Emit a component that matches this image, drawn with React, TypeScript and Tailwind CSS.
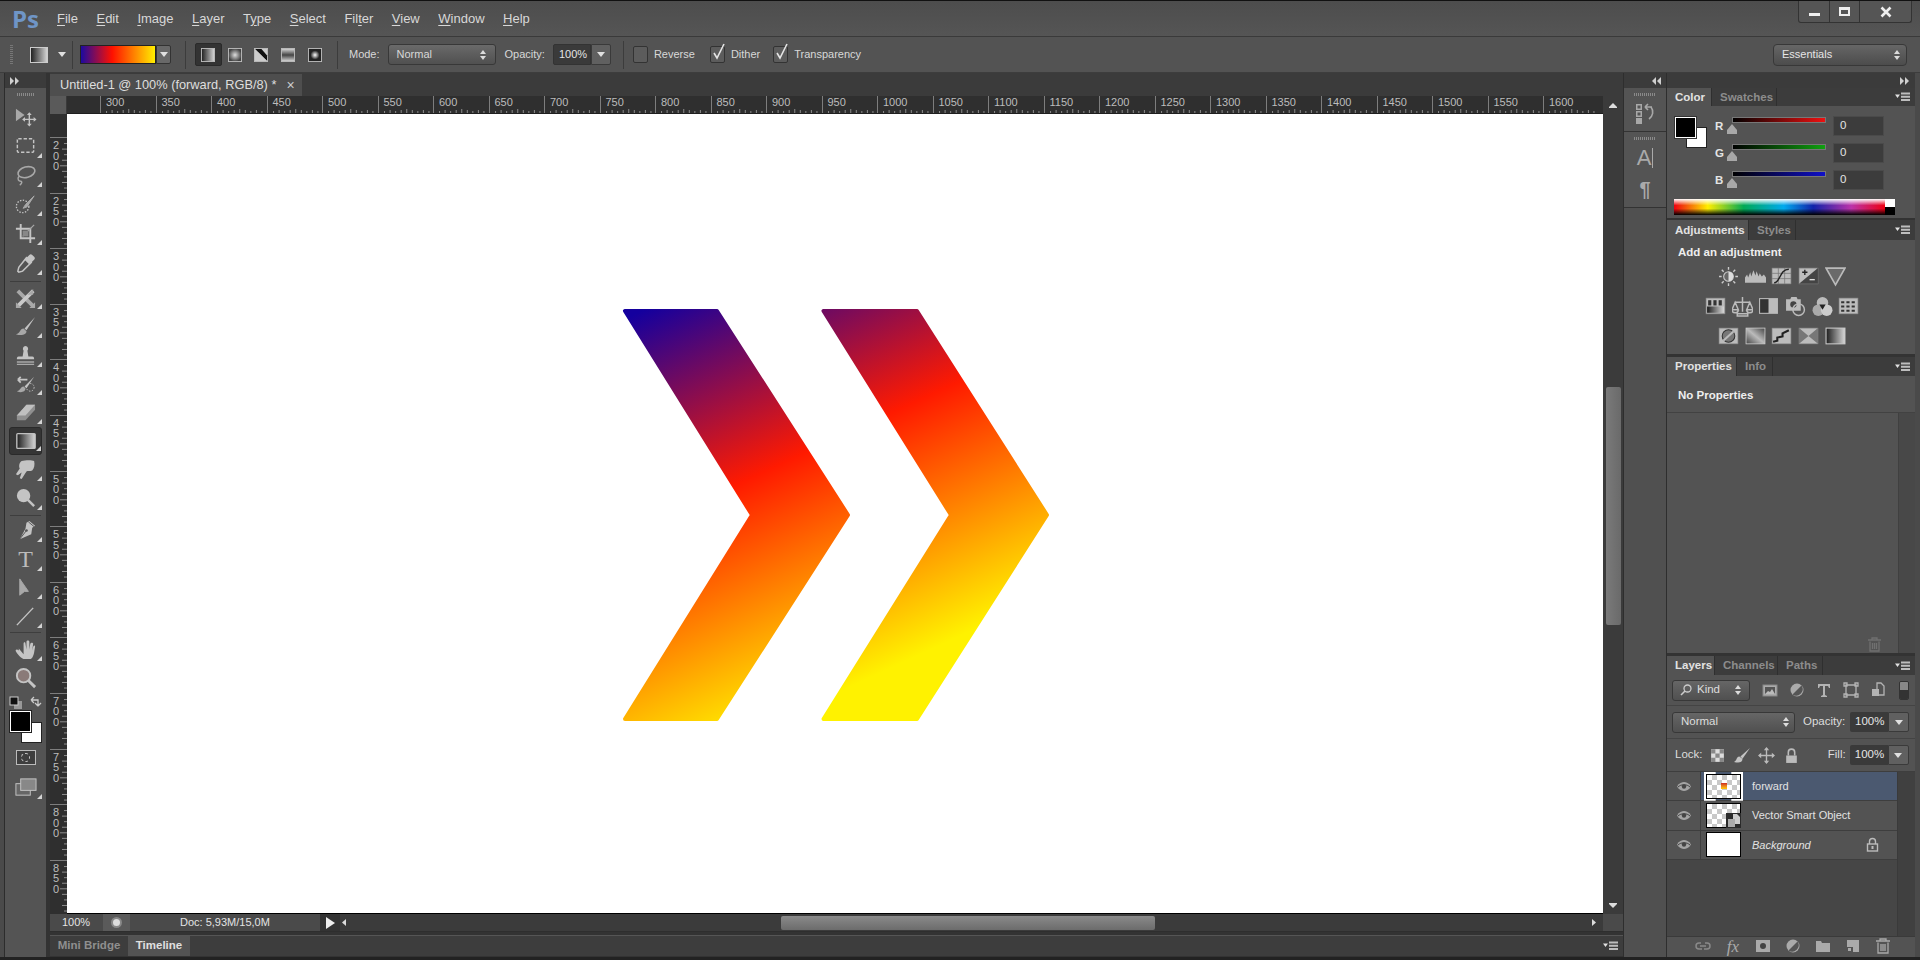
import React from "react";

const I = ({ s = 20, w, h, vb = "0 0 20 20", children }: { s?: number; w?: number; h?: number; vb?: string; children: React.ReactNode }) => (
  <svg width={w ?? s} height={h ?? s} viewBox={vb} className="shrink-0 block">{children}</svg>
);
const G = "#a8a8a8";
const L = "#c4c4c4";

const Updown = () => (
  <I w={8} h={12} vb="0 0 8 12"><path d="M4 1l3 4H1zM4 11L1 7h6z" fill="#dcdcdc" /></I>
);
const Caret = () => (
  <I w={8} h={5} vb="0 0 8 5"><path d="M0 0h8L4 5z" fill="#e0e0e0" /></I>
);
const PanelMenu = () => (
  <I w={15} h={10} vb="0 0 15 10"><path d="M0 2.5h5L2.5 6z" fill="#e0e0e0" /><path d="M6 .5h9v2H6zM6 3.7h9v2H6zM6 7h9v2H6z" fill="#bdbdbd" /></I>
);
const Gripper = ({ w = 22 }: { w?: number }) => (
  <div className="h-[3px] mx-auto bg-[repeating-linear-gradient(to_right,#8a8a8a_0,#8a8a8a_1px,transparent_1px,transparent_2px)]" style={{ width: w }} />
);
const DoubleArrow = ({ left = false }: { left?: boolean }) => (
  <I w={9} h={8} vb="0 0 9 8"><path d={left ? "M4 0v8L0 4zM9 0v8L5 4z" : "M0 0v8l4-4zM5 0v8l4-4z"} fill="#cfcfcf" /></I>
);

const Menu = () => {
  const items: [string, string, string][] = [
    ["", "F", "ile"], ["", "E", "dit"], ["", "I", "mage"], ["", "L", "ayer"], ["T", "y", "pe"],
    ["", "S", "elect"], ["Fil", "t", "er"], ["", "V", "iew"], ["", "W", "indow"], ["", "H", "elp"],
  ];
  return (
    <div className="h-[37px] shrink-0 border-t border-[#111] bg-linear-to-b from-[#4d4d4d] to-[#555] flex items-center relative border-b-[#3a3a3a] border-b">
      <div className="w-[57px] pl-[12px] text-[24px] leading-none font-bold text-[#6f95c6] font-['Open_Sans',sans-serif]">Ps</div>
      <div className="flex gap-[18.5px] text-[13px] text-[#d8d8d8]">
        {items.map(([a, u, b]) => (
          <span key={a + u + b}>{a}<span className="underline underline-offset-2">{u}</span>{b}</span>
        ))}
      </div>
      <div className="ml-auto mr-[8px] self-start flex h-[22px] w-[114px] border border-t-0 border-[#333] rounded-b-[3px] bg-[#555]">
        <div className="w-[31px] flex items-center justify-center border-r border-[#333] pt-[5px]"><div className="w-[11px] h-[3px] bg-[#eee]" /></div>
        <div className="w-[30px] flex items-center justify-center border-r border-[#333]"><div className="w-[11px] h-[9px] border-2 border-t-[3px] border-[#eee]" /></div>
        <div className="flex-1 flex items-center justify-center">
          <I s={12} vb="0 0 12 12"><path d="M1.5 1.5l9 9M10.5 1.5l-9 9" stroke="#eee" strokeWidth="2.6" /></I>
        </div>
      </div>
    </div>
  );
};

const VSep = ({ ml = 0, mr = 0 }: { ml?: number; mr?: number }) => (
  <div className="w-px h-[28px] bg-[#3c3c3c] shrink-0" style={{ marginLeft: ml, marginRight: mr }} />
);
const Check = ({ on }: { on?: boolean }) => (
  <div className="w-[15px] h-[17px] shrink-0 border border-[#333] rounded-[2px] bg-[#5c5c5c] relative">
    {on && (
      <div className="absolute left-0 -top-[4px]">
        <I w={15} h={18} vb="0 0 15 18"><path d="M3 10l3 5 7-14" fill="none" stroke="#e4e4e4" strokeWidth="1.6" /></I>
      </div>
    )}
  </div>
);

const ModeIcons = () => {
  const fills = ["url(#gl)", "url(#gr)", "", "url(#gf)", "url(#gd)"];
  return (
    <>
      {fills.map((f, i) => (
        <div key={i} className={"w-[26.6px] h-[23px] flex items-center justify-center rounded-[2px] " + (i === 0 ? "bg-[#333] border border-[#2a2a2a]" : "")}>
          <I s={14} vb="0 0 15 15">
            <rect x=".5" y=".5" width="14" height="14" fill={f || "#ccc"} stroke="#bbb" />
            {i === 2 && <path d="M1 1h7l6 7v6z" fill="#111" />}
            {i === 2 && <path d="M1 1l13 13H1z" fill="#ccc" />}
          </I>
        </div>
      ))}
    </>
  );
};

const Options = () => (
  <div className="h-[36px] shrink-0 bg-[#535353] border-b border-[#3d3d3d] flex items-center text-[11px] text-[#d8d8d8] pl-[10px]">
    <div className="w-[3px] h-[20px] bg-[repeating-linear-gradient(to_bottom,#777_0,#777_1px,transparent_1px,transparent_2px)] mr-[17px]" />
    <I w={18} h={16} vb="0 0 18 16"><rect x=".5" y=".5" width="17" height="15" fill="url(#gl)" stroke="#ccc" /></I>
    <div className="ml-[10px] mr-[6px]"><Caret /></div>
    <VSep ml={0} mr={7} />
    <div className="w-[76px] h-[19px] border border-[#222] bg-[linear-gradient(to_right,#1c0aa0,#ff1000_42%,#ffee00)]" />
    <div className="w-[15px] h-[19px] bg-[#686868] border border-[#333] rounded-r-[2px] flex items-center justify-center"><Caret /></div>
    <VSep ml={14} mr={9} />
    <ModeIcons />
    <VSep ml={9} mr={11} />
    <span>Mode:</span>
    <div className="ml-[8px] w-[108px] h-[21px] px-[8px] flex items-center justify-between rounded-[3px] border border-[#383838] bg-linear-to-b from-[#6a6a6a] to-[#505050]">
      <span>Normal</span><Updown />
    </div>
    <span className="ml-[9px] mr-[8px]">Opacity:</span>
    <div className="w-[38px] h-[21px] pl-[5px] flex items-center bg-[#3a3a3a] border border-[#333] rounded-l-[2px] text-[#e4e4e4]">100%</div>
    <div className="w-[20px] h-[21px] bg-[#606060] border border-[#3a3a3a] rounded-r-[2px] flex items-center justify-center"><Caret /></div>
    <VSep ml={12} mr={9} />
    <Check />
    <span className="ml-[6px] mr-[15px]">Reverse</span>
    <Check on />
    <span className="ml-[6px] mr-[13px]">Dither</span>
    <Check on />
    <span className="ml-[6px]">Transparency</span>
    <div className="ml-auto mr-[13px] w-[134px] h-[22px] pl-[8px] pr-[5px] flex items-center justify-between rounded-[4px] border border-[#383838] bg-linear-to-b from-[#666] to-[#4c4c4c] text-[#e6e6e6]">
      <span>Essentials</span><Updown />
    </div>
  </div>
);

const toolIcons: Record<string, React.ReactNode> = {
  move: <><path d="M2 4v13l9-6.5z" fill={G} /><path d="M16 9v12M10 15h12" stroke={L} strokeWidth="1.5" /><path d="M16 7.5l2.5 3h-5zM16 22.5l-2.5-3h5zM8.5 15l3-2.5v5zM23.5 15l-3 2.5v-5z" fill={L} /></>,
  marquee: <rect x="3.5" y="5" width="17" height="14" rx="1" fill="none" stroke={L} strokeWidth="1.5" strokeDasharray="3.5 2" />,
  lasso: <><ellipse cx="13" cy="8.5" rx="9" ry="5.5" transform="rotate(-15 13 8.5)" fill="none" stroke={G} strokeWidth="1.7" /><path d="M5 13c-2 3 0 5 2 5 2 0 1 3-1 4" fill="none" stroke={G} strokeWidth="1.5" /></>,
  quick: <><circle cx="9" cy="14" r="6.5" fill="none" stroke={L} strokeWidth="1.4" strokeDasharray="1.5 1.5" /><path d="M21 3l-9 9-2.5 4 4-1.5z" fill={G} stroke={G} /></>,
  crop: <><path d="M7 2v15h15M2 7h15v15" fill="none" stroke={L} strokeWidth="2" /><path d="M9 15l12-12" stroke={G} strokeWidth="1.2" /><rect x="9" y="9" width="6" height="6" fill="#888" /></>,
  dropper: <><path d="M13 6l5 5-9 9-4 1-1-1 1-4z" fill="none" stroke={L} strokeWidth="1.6" /><path d="M11 8l5-5c1-1 2-1 3 0l2 2c1 1 1 2 0 3l-5 5z" fill={L} /></>,
  heal: <><path d="M4 4l16 16" stroke={G} strokeWidth="4" /><path d="M20 4L4 20" stroke="#c8c8c8" strokeWidth="4" /><path d="M20 2v6h-6zM2 16l6 6H2zM22 16v6h-6z" fill={G} /></>,
  brush: <><path d="M22 2L11 14l2 2z" fill={L} /><path d="M10 14c-4 0-3 5-8 6 5 2 11 1 11-3z" fill={G} /></>,
  stamp: <><path d="M12 2a3 3 0 012 5l1 6h4c2 0 2 2 2 3H3c0-1 0-3 2-3h4l1-6a3 3 0 012-5z" fill={L} /><path d="M3 18h18v1.5H3zM3 20.5h18V22H3z" fill={G} /></>,
  hist: <><path d="M21 5L11 15l2 2z" fill={L} /><path d="M10 15c-3 0-3 4-7 5 4 2 9 1 9-3z" fill={G} /><path d="M4 8h10M4 8l3-3M4 8l3 3" stroke={L} strokeWidth="1.8" fill="none" /><circle cx="17" cy="16" r="4" fill="none" stroke={L} strokeDasharray="1.5 1.5" /></>,
  eraser: <><path d="M3 15L13 4h9v5L12 20H3z" fill="#8f8f8f" /><path d="M3 15L13 4h9l-10 11z" fill="#c0c0c0" /></>,
  gradient: <rect x="2" y="4" width="20" height="16" rx="1" fill="url(#gl)" stroke="#c0c0c0" strokeWidth="1.5" />,
  smudge: <path d="M8 3c4-1 11-1 13 0 1 4 0 8-2 10-2 1-5 0-6 1l-5 8-2-1 2-6-4 3-2-1 4-6c-1-2-1-6 2-8z" fill={L} />,
  dodge: <><circle cx="10" cy="9" r="7" fill={L} /><path d="M14 13l7 7" stroke={L} strokeWidth="2.6" /></>,
  pen: <><path d="M16 2l6 5-3 2-1 7-12 5 6-11 1-6z" fill={L} /><path d="M6 21l7-9" stroke="#555" strokeWidth="1" /><circle cx="13" cy="12" r="1.4" fill="#555" /><path d="M15 3l6 5" stroke="#555" /></>,
  path: <path d="M6 2v17l5-4 4 0z" fill={G} stroke={G} />,
  line: <path d="M3 21L20 3" stroke={L} strokeWidth="1.5" />,
  hand: <path d="M5 11l5 6V6c0-2 2-2 2 0l1 6V4c0-2 3-2 3 0v8l1-6c1-2 3-1 3 0l-1 7 1-4c1-2 2-1 2 0l-1 6c-1 5-3 7-4 7h-6c-3 0-7-5-9-8-1-2 1-3 3-1z" fill={L} />,
  zoom: <><circle cx="10" cy="9" r="7" fill="#8a7a78" stroke={L} strokeWidth="2" /><path d="M15 14l7 7" stroke={L} strokeWidth="3" /></>,
  screen: <><rect x="2" y="8" width="15" height="12" fill="#666" stroke={L} /><rect x="7" y="3" width="16" height="12" fill="#888" stroke={L} /></>,
};

const Tool = ({ n, flag = true, active = false, tight = false }: { n: string; flag?: boolean; active?: boolean; tight?: boolean }) => (
  <div className={"relative flex items-center justify-center rounded-[3px] mx-[4px] " + (tight ? "h-[28.6px] " : "h-[29.3px] ") + (active ? "bg-[#353535] border border-[#2a2a2a]" : "")}>
    {n === "type" ? (
      <span className="text-[24px] leading-none text-[#bbb] font-['Liberation_Serif',serif]">T</span>
    ) : (
      <I s={active ? 22 : 23} vb="0 0 24 24">{toolIcons[n]}</I>
    )}
    {flag && <div className="absolute right-[0px] bottom-[3px] w-0 h-0 border-l-[5px] border-l-transparent border-b-[5px] border-b-[#d4d4d4]" />}
  </div>
);
const ToolSep = () => <div className="h-px bg-[#3e3e3e] mx-[5px]" />;

const LeftDock = () => (
  <div className="w-[50px] shrink-0 flex bg-[#333]">
    <div className="w-[5px] bg-[#4a4a4a] border-r border-[#2c2c2c]" />
    <div className="w-[41px] flex flex-col">
      <div className="h-[15px] bg-[#3b3b3b] flex items-center pl-[5px]"><DoubleArrow /></div>
      <div className="flex-1 bg-[#545454]">
        <div className="pt-[5px] h-[14px]"><Gripper w={18} /></div>
        {["move", "marquee", "lasso", "quick", "crop", "dropper"].map(n => <Tool key={n} n={n} flag={n !== "move"} />)}
        <div className="h-[3px]" />
        <ToolSep />
        <div className="h-[2px]" />
        {["heal", "brush", "stamp", "hist", "eraser"].map(n => <Tool key={n} n={n} tight />)}
        <Tool n="gradient" active tight />
        {["smudge", "dodge"].map(n => <Tool key={n} n={n} tight />)}
        <div className="h-[2px]" />
        <ToolSep />
        <div className="h-[1px]" />
        {["pen", "type", "path", "line"].map(n => <Tool key={n} n={n} tight />)}
        <div className="h-[1px]" />
        <ToolSep />
        <div className="h-[2px]" />
        <Tool n="hand" />
        <Tool n="zoom" flag={false} />
        <div className="h-[14px] mt-[2px] flex justify-between px-[4px] items-start">
          <I s={14} vb="0 0 14 14"><rect x="5" y="5" width="8" height="8" fill="#999" /><rect x="1" y="1" width="8" height="8" fill="#111" stroke="#ccc" /></I>
          <I s={14} vb="0 0 14 14"><path d="M3 4h7v6M3 4l3-3M3 4l3 3M10 10l-3-3M10 10l3-3" fill="none" stroke="#ccc" strokeWidth="1.3" /></I>
        </div>
        <div className="h-[37px] relative mt-[1px]">
          <div className="absolute left-[16px] top-[11px] w-[21px] h-[21px] bg-white border border-[#222]" />
          <div className="absolute left-[5px] top-0 w-[21px] h-[21px] bg-black border border-white outline outline-[#222]" />
        </div>
        <div className="h-[20px] flex justify-center mt-[2px]">
          <div className="w-[20px] h-[15px] border border-[#bbb] bg-[#3e3e3e] flex items-center justify-center"><div className="w-[9px] h-[9px] rounded-full border border-dashed border-[#ccc]" /></div>
        </div>
        <div className="h-[3px]" />
        <Tool n="screen" />
      </div>
    </div>
    <div className="flex-1" />
  </div>
);

const hLabels = Array.from({ length: 27 }, (_, i) => 300 + i * 50);
const vLabels = Array.from({ length: 14 }, (_, i) => 200 + i * 50);

const HTicks = () => (
  <svg width="56" height="6" viewBox="0 0 56 6" className="block shrink-0">
    {[1, 2, 3, 4, 5, 6, 7, 8, 9].map(k => (
      <path key={k} d={`M${k * 5.55} ${k === 5 ? 1 : k % 2 ? 3 : 2}V6`} stroke="#8c8c8c" strokeWidth="1" />
    ))}
  </svg>
);
const VTicks = () => (
  <svg width="7" height="56" viewBox="0 0 7 56" className="block shrink-0">
    {[1, 2, 3, 4, 5, 6, 7, 8, 9].map(k => (
      <path key={k} d={`M${k === 5 ? 0 : k % 2 ? 4 : 2} ${k * 5.56}H7`} stroke="#8c8c8c" strokeWidth="1" />
    ))}
  </svg>
);

const TopRuler = () => (
  <div className="h-[18px] shrink-0 flex">
    <div className="w-[17px] shrink-0 bg-[#5a5a5a] border-r border-[#3a3a3a]" />
    <div className="flex-1 min-w-0 overflow-hidden bg-[#2f2f2f] flex pl-[33px] border-b border-[#1f1f1f]">
      {hLabels.map(v => (
        <div key={v} className="w-[55.5px] shrink-0 border-l border-[#7d7d7d] flex flex-col justify-between overflow-hidden">
          <div className="pl-[5px] text-[11px] leading-[12px] text-[#bcbcbc]">{v}</div>
          <HTicks />
        </div>
      ))}
    </div>
    <div className="w-[20px] shrink-0 bg-[#3b3b3b] flex justify-center pt-[7px]">
      <I w={8} h={5} vb="0 0 8 5"><path d="M4 0l4 4v1H0V4z" fill="#ddd" /></I>
    </div>
  </div>
);
const LeftRuler = () => (
  <div className="w-[17px] shrink-0 bg-[#2f2f2f] overflow-hidden pt-[23px]">
    {vLabels.map(v => (
      <div key={v} className="h-[55.6px] border-t border-[#7d7d7d] flex justify-between">
        <div className="pl-[2px] pt-[2px] text-[11px] leading-[10.5px] text-[#bcbcbc] w-[10px] flex flex-col items-center">
          {String(v).split("").map((d, i) => <span key={i}>{d}</span>)}
        </div>
        <VTicks />
      </div>
    ))}
  </div>
);

const Chevrons = () => (
  <svg width="429" height="415" viewBox="622 308 429 415" className="block mt-[3px] ml-[2px]">
    <defs>
      <linearGradient id="chev" gradientUnits="userSpaceOnUse" x1="633" y1="315" x2="813" y2="704">
        <stop offset="0" stopColor="#14009e" />
        <stop offset="0.46" stopColor="#ff1a00" />
        <stop offset="1" stopColor="#fff200" />
      </linearGradient>
    </defs>
    <path d="M625 311H717L848 515L717 719H625L752 515Z" fill="url(#chev)" stroke="url(#chev)" strokeWidth="4" strokeLinejoin="round" />
    <path d="M823.5 311H917L1047 515L917 719H823.5L951 515Z" fill="url(#chev)" stroke="url(#chev)" strokeWidth="4" strokeLinejoin="round" />
  </svg>
);

const Center = () => (
  <div className="flex-1 min-w-0 flex flex-col">
    <div className="h-[23px] shrink-0 bg-[#3b3b3b] flex items-end">
      <div className="w-[252px] h-[22px] bg-[#4e4e4e] flex items-center pl-[10px] text-[12.8px] text-[#dedede] whitespace-nowrap">
        <span>Untitled-1 @ 100% (forward, RGB/8) *</span>
        <span className="ml-[10px] text-[14px] leading-none text-[#ccc]">×</span>
      </div>
    </div>
    <TopRuler />
    <div className="flex-1 min-h-0 flex">
      <LeftRuler />
      <div className="flex-1 bg-white flex items-center justify-center border-b border-black"><Chevrons /></div>
      <div className="w-[20px] shrink-0 bg-[#3b3b3b] flex flex-col items-center">
        <div className="h-[273px]" />
        <div className="w-[15px] h-[238px] bg-linear-to-r from-[#7a7a7a] to-[#6a6a6a] rounded-[2px]" />
        <div className="mt-auto mb-[6px]"><I w={8} h={5} vb="0 0 8 5"><path d="M0 0h8v1L4 5 0 1z" fill="#ddd" /></I></div>
      </div>
    </div>
    <div className="h-[18px] shrink-0 flex items-center text-[11px] text-[#e4e4e4] bg-[#4a4a4a] border-b border-[#2e2e2e] whitespace-nowrap">
      <div className="w-[53px] pl-[12px]">100%</div>
      <div className="w-[27px] h-full bg-[#5a5a5a] flex items-center justify-center"><div className="w-[11px] h-[11px] rounded-full bg-[#ddd] border-2 border-[#888]" /></div>
      <div className="w-[190px] pl-[50px]">Doc: 5,93M/15,0M</div>
      <div className="w-[20px] h-full bg-[#333] flex items-center justify-center">
        <I w={9} h={12} vb="0 0 9 12"><path d="M0 0l9 6-9 6z" fill="#eee" /></I>
      </div>
      <div className="flex-1 h-full bg-[#3b3b3b] flex items-center pl-[2px]">
        <I w={5} h={7} vb="0 0 5 7"><path d="M4 0v7L0 3.5z" fill="#ddd" /></I>
        <div className="w-[434px]" />
        <div className="w-[374px] h-[14px] rounded-[2px] bg-linear-to-b from-[#8a8a8a] to-[#6c6c6c]" />
        <div className="flex-1" />
        <div className="mr-[7px]"><I w={5} h={7} vb="0 0 5 7"><path d="M1 0v7l4-3.5z" fill="#ddd" /></I></div>
      </div>
      <div className="w-[20px] h-full bg-[#4a4a4a]" />
    </div>
    <div className="h-[3px] shrink-0 bg-[#333]" />
    <div className="h-[21px] shrink-0 bg-[#3d3d3d] flex items-stretch text-[11.5px] font-bold border-t border-[#555]">
      <div className="w-[78px] flex items-center justify-center text-[#8f8f8f]">Mini Bridge</div>
      <div className="w-[62px] flex items-center justify-center text-[#e0e0e0] bg-[#535353]">Timeline</div>
      <div className="ml-auto mr-[5px] self-center"><PanelMenu /></div>
    </div>
    <div className="h-[1px] shrink-0 bg-[#333]" />
  </div>
);

const CollapsedDock = () => (
  <div className="w-[44px] shrink-0 flex flex-col bg-[#3a3a3a] border-x border-[#2e2e2e]">
    <div className="h-[15px] shrink-0 bg-[#3b3b3b] flex items-center justify-end pr-[5px]"><DoubleArrow left /></div>
    <div className="h-[44px] shrink-0 bg-[#545454] border-b border-[#333] pt-[5px]">
      <Gripper w={22} />
      <div className="flex justify-center items-center gap-[1px] mt-[6px]">
        <I s={22} vb="0 0 22 22">
          <path d="M2 2h6v6H2zM3.5 3.5v3h3v-3zM2 9h6v6H2zM3.5 10.5v3h3v-3z" fill={G} fillRule="evenodd" />
          <rect x="2" y="16" width="6" height="6" fill={G} />
          <path d="M11 5h7M11 5l3-3M11 5l3 3M17 5c3 4 2 9-2 12" fill="none" stroke={G} strokeWidth="1.6" />
        </I>
      </div>
    </div>
    <div className="h-[76px] shrink-0 bg-[#545454] border-b border-[#333] pt-[5px] flex flex-col items-center">
      <Gripper w={22} />
      <div className="mt-[6px] text-[22px] leading-[24px] text-[#aaa] flex items-center">A<span className="w-px h-[20px] bg-[#aaa] ml-[1px]" /></div>
      <div className="mt-[8px] text-[20px] leading-[22px] font-bold text-[#aaa]">¶</div>
    </div>
    <div className="flex-1 bg-[#505050]" />
  </div>
);

const Tabs = ({ tabs, h = 19 }: { tabs: [string, number][]; h?: number }) => (
  <div className="shrink-0 flex bg-[#3c3c3c] text-[11.5px] font-bold items-stretch" style={{ height: h }}>
    {tabs.map(([t, w], i) => (
      <div key={t} className={"flex items-center pl-[8px] pt-[1px] border-r border-[#2f2f2f] " + (i === 0 ? "bg-[#535353] text-[#e2e2e2]" : "text-[#8c8c8c]")} style={{ width: w }}>{t}</div>
    ))}
    <div className="ml-auto mr-[5px] self-center"><PanelMenu /></div>
  </div>
);

const Slider = ({ l, grad }: { l: string; grad: string }) => (
  <div className="h-[27px] flex items-start">
    <div className="w-[17px] pt-[2px] text-[11.5px] font-bold text-[#e4e4e4]">{l}</div>
    <div className="w-[94px] relative pt-[1px]">
      <div className={"h-[6px] border border-[#777] " + grad} />
      <div className="absolute left-[-6px] top-[8px]"><I w={12} h={10} vb="0 0 12 10"><path d="M6 0l5 6v4H1V6z" fill="#a8a8a8" /></I></div>
    </div>
    <div className="ml-[7px] w-[51px] h-[20px] bg-[#3c3c3c] border border-[#4a4a4a] flex items-center pl-[6px] text-[11.5px] text-[#e4e4e4]">0</div>
  </div>
);

const ColorPanel = () => (
  <div className="h-[130px] shrink-0 bg-[#535353] flex flex-col">
    <Tabs tabs={[["Color", 45], ["Swatches", 65]]} h={18} />
    <div className="flex pt-[10px] pl-[7px]">
      <div className="w-[41px] h-[36px] relative">
        <div className="absolute left-[12px] top-[11px] w-[21px] h-[21px] bg-white border border-[#222]" />
        <div className="absolute left-[1px] top-[1px] w-[21px] h-[21px] bg-black border border-white outline outline-[#333]" />
      </div>
      <div>
        <Slider l="R" grad="bg-[linear-gradient(to_right,#000,#ee1010)]" />
        <Slider l="G" grad="bg-[linear-gradient(to_right,#000,#10a010)]" />
        <Slider l="B" grad="bg-[linear-gradient(to_right,#000,#1010c8)]" />
      </div>
    </div>
    <div className="mt-[2px] mx-[7px] flex h-[16px] w-[221px]">
      <div className="flex-1 bg-[linear-gradient(to_bottom,#fff,transparent_40%,transparent_60%,#000),linear-gradient(to_right,#e01,#fe0_16%,#0a5_33%,#0ae_52%,#12a_66%,#b3a_84%,#e01_100%)]" />
      <div className="w-[10px] flex flex-col"><div className="flex-1 bg-white" /><div className="flex-1 bg-black" /></div>
    </div>
  </div>
);

const adjIcon = (children: React.ReactNode, k: number) => <div key={k} className="w-[26.7px] flex justify-center"><I s={21} vb="0 0 20 20">{children}</I></div>;
const box = (inner: React.ReactNode) => <><rect x="1" y="2" width="18" height="15" fill="#bcbcbc" stroke="#888" strokeWidth=".6" />{inner}</>;

const row1 = [
  <><circle cx="10" cy="10" r="4.6" fill="#666" stroke="#ccc" /><path d="M10 10V5.4a4.6 4.6 0 010 9.2z" fill="#ddd" /><path d="M10 1v2.5M10 16.5V19M1 10h2.5M16.5 10H19M3.6 3.6l1.8 1.8M14.6 14.6l1.8 1.8M3.6 16.4l1.8-1.8M14.6 5.4l1.8-1.8" stroke="#ccc" strokeWidth="1.3" /></>,
  <path d="M0 16V11l2-3 1 3 2-5 1 4 2-6 2 5 1-4 2 5 1-3 2 3 2-2 2 3v5z" fill="#bcbcbc" />,
  <>{box(<path d="M1 7h18M1 12h18M7 2v15M13 2v15" stroke="#777" strokeWidth=".7" />)}<path d="M3 16c6 0 5-13 14-13" fill="none" stroke="#222" strokeWidth="1.4" /></>,
  <>{box(<path d="M1 17L19 2v15z" fill="#444" />)}<path d="M4 6h5M6.5 3.5v5" stroke="#222" strokeWidth="1.3" /><path d="M11 13h5" stroke="#ddd" strokeWidth="1.3" /></>,
  <path d="M1 2h18L10 18z" fill="#6a6a6a" stroke="#bbb" strokeWidth="1.6" />,
];
const row2 = [
  <>{box(<><rect x="3" y="4" width="3" height="5" fill="#333" /><rect x="8" y="4" width="3" height="5" fill="#333" /><rect x="13" y="4" width="3" height="5" fill="#333" /><rect x="2" y="10" width="16" height="6" fill="url(#gl)" /></>)}</>,
  <path d="M10 1v14M3 6h14M3 6l-3 7h6zM17 6l-3 7h6zM5 17h10v2H5zM0 13a3 3 0 006 0M14 13a3 3 0 006 0" fill="none" stroke="#bcbcbc" strokeWidth="1.4" />,
  <><rect x="1" y="2" width="18" height="15" fill="#bcbcbc" /><rect x="2" y="3" width="8" height="13" fill="#333" /></>,
  <><path d="M1 3h4l1-2h5l1 2h3v11H1z" fill="#bcbcbc" /><circle cx="8" cy="8" r="3" fill="#444" /><circle cx="13" cy="13" r="5.5" fill="none" stroke="#bbb" strokeWidth="1.4" /></>,
  <><circle cx="10" cy="6.5" r="5.5" fill="#bbb" /><circle cx="6" cy="13.5" r="5.5" fill="#aaa" /><circle cx="14" cy="13.5" r="5.5" fill="#ccc" /><path d="M7 8h6l-3 5z" fill="#222" /></>,
  <>{box(<path d="M3 5h3v2H3zM8 5h3v2H8zM13 5h3v2h-3zM3 9h3v2H3zM8 9h3v2H8zM13 9h3v2h-3zM3 13h3v2H3zM8 13h3v2H8zM13 13h3v2h-3z" fill="#333" />)}</>,
];
const row3 = [
  <>{box(<><circle cx="10" cy="9.5" r="6" fill="#777" stroke="#333" /><path d="M5 14L15 5" stroke="#bbb" strokeWidth="2" /></>)}</>,
  <><rect x="1" y="2" width="18" height="15" fill="url(#diag)" stroke="#ccc" strokeWidth=".8" /></>,
  <>{box(<path d="M2 15l4-1v-3l5-1V7l6-3" fill="none" stroke="#222" strokeWidth="2" />)}</>,
  <>{box(<path d="M1 2l9 7.5L1 17zM19 2l-9 7.5L19 17z" fill="#777" />)}</>,
  <><rect x="1" y="2" width="18" height="15" fill="url(#gl)" stroke="#ccc" /></>,
];

const AdjustPanel = () => (
  <div className="h-[134px] shrink-0 bg-[#535353] flex flex-col mt-[2px]">
    <Tabs tabs={[["Adjustments", 82], ["Styles", 47]]} h={20} />
    <div className="pl-[11px] pt-[6px] h-[21px] text-[11.5px] leading-[13px] font-bold text-[#eee]">Add an adjustment</div>
    <div className="h-[30px] pl-[48px] flex items-center">{row1.map(adjIcon)}</div>
    <div className="h-[30px] pl-[35px] flex items-center">{row2.map(adjIcon)}</div>
    <div className="h-[30px] pl-[48px] flex items-center">{row3.map(adjIcon)}</div>
  </div>
);

const Trash = ({ c = "#aaa" }: { c?: string }) => (
  <I s={15} vb="0 0 15 15"><path d="M1 3h13M5 3V1h5v2M3 4.5V14h9V4.5M5.5 6v6M7.5 6v6M9.5 6v6" fill="none" stroke={c} strokeWidth="1.3" /></I>
);

const PropsPanel = () => (
  <div className="h-[296px] shrink-0 bg-[#535353] flex flex-col mt-[3px]">
    <Tabs tabs={[["Properties", 70], ["Info", 36]]} h={19} />
    <div className="h-[37px] shrink-0 flex items-center pl-[11px] pt-[3px] text-[11.5px] font-bold text-[#eee] border-b border-[#424242]">No Properties</div>
    <div className="flex-1 flex justify-end">
      <div className="flex-1 flex flex-col justify-end items-end pr-[16px] pb-[1px]"><Trash c="#707070" /></div>
      <div className="w-[17px] bg-[#484848] border-l border-[#404040]" />
    </div>
  </div>
);

const checker = "bg-[repeating-conic-gradient(#c8c8c8_0_25%,#fff_0_50%)] bg-[length:10px_10px]";
const Eye = () => (
  <I w={16} h={11} vb="0 0 16 11"><path d="M1 5.5C3 2 6 1 8 1s5 1 7 4.5C13 9 10 10 8 10S3 9 1 5.5z" fill="#a4a4a4" /><path d="M2 6C5 3 11 3 14 6" fill="none" stroke="#444" /><circle cx="8" cy="5.5" r="2.2" fill="#444" /></I>
);

const Row = ({ sel, thumb, name, italic, lock }: { sel?: boolean; thumb: React.ReactNode; name: string; italic?: boolean; lock?: boolean }) => (
  <div className={"h-[29.4px] shrink-0 flex items-center border-b border-[#3e3e3e] " + (sel ? "bg-[#4b5970]" : "bg-[#535353]")}>
    <div className="w-[34px] h-full shrink-0 flex items-center justify-center border-r border-[#3e3e3e] bg-[#535353]"><Eye /></div>
    <div className="ml-[5px] w-[35px] h-[25px] shrink-0 relative">{thumb}</div>
    <span className={"ml-[11px] text-[11px] text-[#e2e2e2] " + (italic ? "italic" : "")}>{name}</span>
    {lock && (
      <div className="ml-auto mr-[18px]"><I w={13} h={15} vb="0 0 13 15"><path d="M3.5 7V4.5a3 3 0 016 0V7" fill="none" stroke="#bbb" strokeWidth="1.4" /><rect x="1.5" y="7" width="10" height="7" fill="none" stroke="#bbb" strokeWidth="1.4" /><rect x="5.5" y="9" width="2" height="3" fill="#bbb" /></I></div>
    )}
  </div>
);

const LayersPanel = () => (
  <div className="flex-1 min-h-0 bg-[#535353] flex flex-col mt-[3px]">
    <Tabs tabs={[["Layers", 48], ["Channels", 63], ["Paths", 45]]} h={19} />
    <div className="h-[31px] shrink-0 flex items-center pl-[5px] border-b border-[#444]">
      <div className="w-[78px] h-[21px] rounded-[3px] border border-[#383838] bg-linear-to-b from-[#666] to-[#505050] flex items-center justify-between px-[7px] text-[11.5px] text-[#ddd]">
        <span className="flex items-center gap-[5px]">
          <I s={12} vb="0 0 12 12"><circle cx="7.5" cy="4.5" r="3.5" fill="none" stroke="#ccc" strokeWidth="1.3" /><path d="M5 7L1 11" stroke="#ccc" strokeWidth="1.6" /></I>Kind
        </span><Updown />
      </div>
      <div className="ml-[6px] flex items-center">
        {[
          <><rect x="1" y="3" width="14" height="11" fill="#aaa" stroke="#888" /><rect x="3" y="5" width="10" height="7" fill="#555" /><path d="M3 12l3-3 2 1 2-3 3 5z" fill="#bbb" /></>,
          <><circle cx="8" cy="8" r="6.5" fill="#aaa" /><path d="M3.5 12.5l9-9A6.5 6.5 0 013.5 12.5z" fill="#555" /></>,
          <path d="M2 2h12v4h-1l-1-2H9v9l2 1v1H5v-1l2-1V4H4L3 6H2z" fill="#b4b4b4" />,
          <path d="M3 3h10v10H3z M1 1h3v3H1zM12 1h3v3h-3zM1 12h3v3H1zM12 12h3v3h-3z" fill="none" stroke="#b4b4b4" strokeWidth="1.3" />,
          <><path d="M7 1h4l3 3v9H7z" fill="none" stroke="#b4b4b4" strokeWidth="1.3" /><rect x="2" y="7" width="7" height="7" fill="#b4b4b4" /></>,
        ].map((c, i) => <div key={i} className="w-[27px] flex justify-center"><I s={16} vb="0 0 16 16">{c}</I></div>)}
        <div className="w-[10px] h-[19px] ml-[8px] rounded-[2px] border border-[#333] flex flex-col overflow-hidden"><div className="flex-1 bg-[#888]" /><div className="flex-1 bg-[#333]" /></div>
      </div>
    </div>
    <div className="h-[33px] shrink-0 flex items-center pl-[5px] border-b border-[#444] text-[11.5px] text-[#ddd]">
      <div className="w-[123px] h-[21px] rounded-[3px] border border-[#383838] bg-linear-to-b from-[#666] to-[#505050] flex items-center justify-between pl-[8px] pr-[4px]"><span>Normal</span><Updown /></div>
      <span className="ml-[8px] w-[47px]">Opacity:</span>
      <div className="w-[38px] h-[20px] flex items-center pl-[5px] bg-[#3a3a3a] rounded-l-[2px] text-[#e6e6e6]">100%</div>
      <div className="w-[21px] h-[20px] bg-[#606060] border border-[#3a3a3a] rounded-r-[2px] flex items-center justify-center"><Caret /></div>
    </div>
    <div className="h-[33px] shrink-0 flex items-center pl-[8px] border-b border-[#3e3e3e] text-[11.5px] text-[#ddd]">
      <span className="w-[30px]">Lock:</span>
      {[
        <><rect x="2" y="2" width="12" height="12" fill="#ddd" /><path d="M2 2h4v4H2zM10 2h4v4h-4zM6 6h4v4H6zM2 10h4v4H2zM10 10h4v4h-4z" fill="#888" /></>,
        <><path d="M15 1L6 9l2 2z" fill="#c4c4c4" /><path d="M5 9c-3 0-2 4-5 5 4 1 8 1 8-3z" fill="#c4c4c4" /></>,
        <><path d="M8 1v14M1 8h14" stroke="#bbb" strokeWidth="1.3" /><path d="M8 0l2.5 3h-5zM8 16l-2.5-3h5zM0 8l3-2.5v5zM16 8l-3 2.5v-5z" fill="#bbb" /></>,
        <><path d="M5 8V5a3 3 0 016 0v3" fill="none" stroke="#bbb" strokeWidth="1.5" /><rect x="3" y="8" width="10" height="7" fill="#bbb" /></>,
      ].map((c, i) => <div key={i} className="w-[24.7px] flex justify-center"><I s={17} vb="0 0 16 16">{c}</I></div>)}
      <span className="ml-[24px] w-[22px]">Fill:</span>
      <div className="w-[38px] h-[20px] flex items-center pl-[5px] bg-[#3a3a3a] rounded-l-[2px] text-[#e6e6e6]">100%</div>
      <div className="w-[21px] h-[20px] bg-[#606060] border border-[#3a3a3a] rounded-r-[2px] flex items-center justify-center"><Caret /></div>
    </div>
    <div className="flex-1 min-h-0 flex bg-[#464646]">
      <div className="w-[230px] flex flex-col">
        <Row sel name="forward" thumb={
          <>
            <div className={"w-full h-full border border-black flex items-center justify-center " + checker}>
              <div className="w-[6px] h-[6px] bg-linear-to-b from-[#c22] to-[#fc0]" />
            </div>
            <div className="absolute -inset-[2px] border-2 border-white [clip-path:polygon(0_0,30%_0,30%_8%,70%_8%,70%_0,100%_0,100%_100%,70%_100%,70%_92%,30%_92%,30%_100%,0_100%)]" />
          </>
        } />
        <Row name="Vector Smart Object" thumb={
          <>
            <div className={"w-full h-full border border-black " + checker} />
            <div className="absolute right-0 bottom-0"><I s={15} vb="0 0 15 15"><rect width="15" height="15" fill="#2a2a2a" /><path d="M7 1h4l3 3v7H7z" fill="#ccc" /><rect x="2" y="6" width="7" height="8" fill="#aaa" /></I></div>
          </>
        } />
        <Row name="Background" italic lock thumb={<div className="w-full h-full bg-white border border-black" />} />
      </div>
      <div className="flex-1 bg-[#404040] border-l border-[#3a3a3a]" />
    </div>
    <div className="h-[21px] shrink-0 flex items-center bg-[#535353] pl-[21px] border-t border-[#3a3a3a] pb-[2px]">
      {[
        <path d="M6 5H4a3 3 0 000 6h3M10 5h2a3 3 0 010 6H9M5 8h6" fill="none" stroke="#8a8a8a" strokeWidth="1.5" />,
        null,
        <><rect x="1" y="2" width="14" height="12" fill="#aaa" /><circle cx="8" cy="8" r="3" fill="#444" /></>,
        <><circle cx="8" cy="8" r="6.5" fill="#aaa" /><path d="M3.5 12.5l9-9A6.5 6.5 0 013.5 12.5z" fill="#555" /></>,
        <path d="M1 3h5l1 2h8v9H1z" fill="#aaa" />,
        <><path d="M2 2h12v12H8V9H2z" fill="#aaa" /><rect x="3" y="10" width="3" height="3" fill="#aaa" /></>,
        <path d="M1 3h14M5 3V1h6v2M3 4.5V15h10V4.5M6 6v7M8 6v7M10 6v7" fill="none" stroke="#aaa" strokeWidth="1.3" />,
      ].map((c, i) => (
        <div key={i} className="w-[30px] flex justify-center items-center">
          {c ? <I s={16} vb="0 0 16 16">{c}</I> : <span className="text-[17px] leading-none italic text-[#aaa] font-['Liberation_Serif',serif]">fx</span>}
        </div>
      ))}
    </div>
  </div>
);

const RightPanels = () => (
  <div className="w-[248px] shrink-0 flex flex-col bg-[#333] ">
    <div className="h-[15px] shrink-0 bg-[#3b3b3b] flex items-center justify-end pr-[6px]"><DoubleArrow /></div>
    <ColorPanel />
    <AdjustPanel />
    <PropsPanel />
    <LayersPanel />
  </div>
);

export default function App() {
  return (
    <div className="w-[1920px] h-[960px] flex flex-col overflow-hidden bg-[#2a2a2a] font-['Liberation_Sans',sans-serif] relative">
      <svg className="absolute w-0 h-0">
        <defs>
          <linearGradient id="gl"><stop offset="0" stopColor="#1c1c1c" /><stop offset="1" stopColor="#d8d8d8" /></linearGradient>
          <radialGradient id="gr"><stop offset="0" stopColor="#ddd" /><stop offset="1" stopColor="#444" /></radialGradient>
          <linearGradient id="gf" x2="0" y2="1"><stop offset="0" stopColor="#ddd" /><stop offset=".5" stopColor="#444" /><stop offset="1" stopColor="#ddd" /></linearGradient>
          <radialGradient id="gd"><stop offset="0" stopColor="#fff" /><stop offset=".7" stopColor="#222" /></radialGradient>
          <linearGradient id="diag" x1="0" y1="1" x2="1" y2="0"><stop offset="0" stopColor="#444" /><stop offset=".5" stopColor="#bbb" /><stop offset="1" stopColor="#444" /></linearGradient>
        </defs>
      </svg>
      <Menu />
      <Options />
      <div className="flex-1 min-h-0 flex">
        <LeftDock />
        <Center />
        <CollapsedDock />
        <RightPanels />
        <div className="w-[5px] shrink-0 bg-[#4a4a4a]" />
      </div>
      <div className="h-[3px] shrink-0 bg-[#222]" />
    </div>
  );
}
